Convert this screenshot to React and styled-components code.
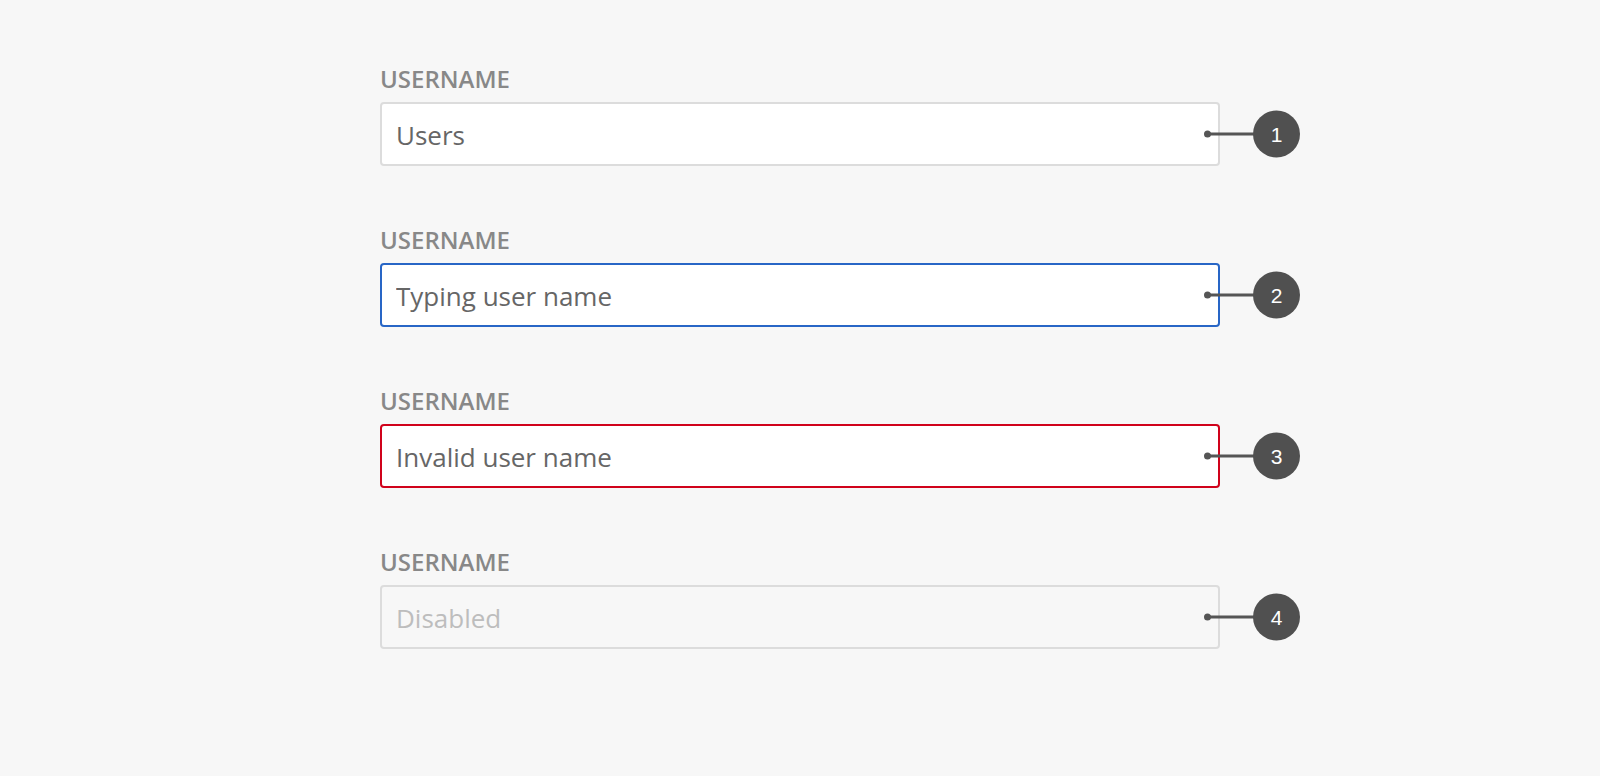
import React from "react";
import styled, { createGlobalStyle, css } from "styled-components";

const Global = createGlobalStyle`
  html, body { margin: 0; padding: 0; background: #f7f7f7; }
  body { font-family: "Open Sans", "Noto Sans", sans-serif; }
  * { box-sizing: border-box; }
`;

const Page = styled.main`
  width: 100%;
  min-height: 776px;
  display: flex;
  justify-content: center;
  padding-top: 63px;
`;

const Form = styled.div`
  width: 840px;
  display: flex;
  flex-direction: column;
  gap: 58px;
`;

const Field = styled.div`
  display: flex;
  flex-direction: column;
  gap: 7px;
`;

const Label = styled.label`
  font-size: 24px;
  line-height: 32px;
  font-weight: 600;
  color: #888888;
  letter-spacing: 0;
`;

const InputWrap = styled.div`
  position: relative;
`;

const stateBorders = {
  default: "#dcdcdc",
  focus: "#2866c6",
  error: "#d0021b",
  disabled: "#dcdcdc",
};

const Input = styled.input`
  width: 100%;
  height: 64px;
  padding: 2px 14px 0;
  border: 2px solid ${(p) => stateBorders[p.$state]};
  border-radius: 4px;
  background: #ffffff;
  font-family: "Open Sans", "Noto Sans", sans-serif;
  font-size: 26px;
  color: #666666;
  outline: none;
  ${(p) =>
    p.$state === "disabled" &&
    css`
      background: #f7f7f7;
      color: #bdbdbd;
      -webkit-text-fill-color: #bdbdbd;
      opacity: 1;
    `}
`;

const Marker = styled.div`
  position: absolute;
  top: 50%;
  left: 824px;
  transform: translateY(-50%);
  display: flex;
  align-items: center;
  pointer-events: none;
`;

const Dot = styled.span`
  width: 7px;
  height: 7px;
  border-radius: 50%;
  background: #555555;
`;

const Line = styled.span`
  width: 46px;
  height: 3px;
  margin-left: -2px;
  background: #555555;
`;

const Badge = styled.span`
  width: 47px;
  height: 47px;
  margin-left: -2px;
  border-radius: 50%;
  background: #505050;
  color: #ffffff;
  display: flex;
  align-items: center;
  justify-content: center;
  font-family: "Liberation Sans", Arial, sans-serif;
  font-size: 21px;
`;

const fields = [
  { value: "Users", state: "default" },
  { value: "Typing user name", state: "focus" },
  { value: "Invalid user name", state: "error" },
  { value: "Disabled", state: "disabled" },
];

export default function App() {
  return (
    <>
      <Global />
      <Page>
        <Form>
          {fields.map((f, i) => (
            <Field key={i}>
              <Label>USERNAME</Label>
              <InputWrap>
                <Input
                  $state={f.state}
                  defaultValue={f.value}
                  disabled={f.state === "disabled"}
                  readOnly
                />
                <Marker>
                  <Dot />
                  <Line />
                  <Badge>{i + 1}</Badge>
                </Marker>
              </InputWrap>
            </Field>
          ))}
        </Form>
      </Page>
    </>
  );
}
